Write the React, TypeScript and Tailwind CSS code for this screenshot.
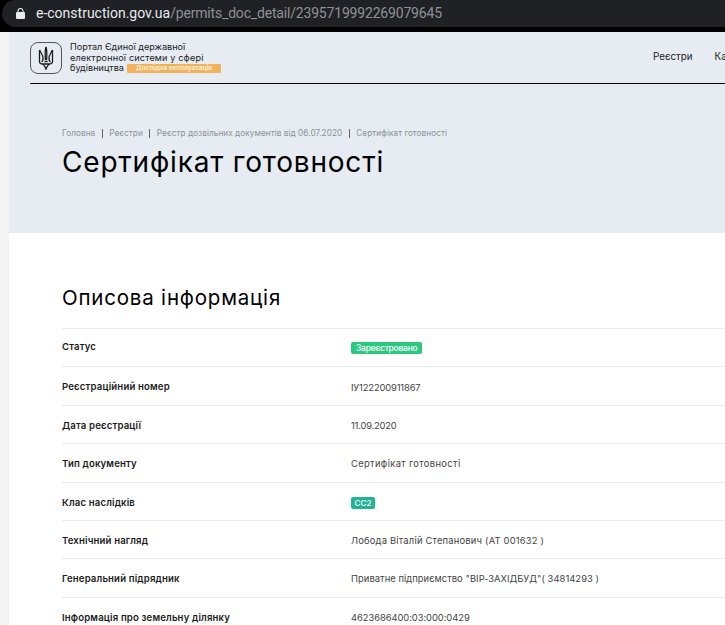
const ROWS: { label: string; value: string; kind?: string; cls?: string }[] = [
  { label: "Статус", value: "Зареєстровано", kind: "status" },
  { label: "Реєстраційний номер", value: "ІУ122200911867", cls: "tracking-[-0.15px]" },
  { label: "Дата реєстрації", value: "11.09.2020", cls: "tracking-[-0.2px]" },
  { label: "Тип документу", value: "Сертифікат готовності", cls: "tracking-[0.35px]" },
  { label: "Клас наслідків", value: "СС2", kind: "class" },
  { label: "Технічний нагляд", value: "Лобода Віталій Степанович (АТ 001632 )", cls: "tracking-[0.2px]" },
  { label: "Генеральний підрядник", value: "Приватне підприємство \"ВІР-ЗАХІДБУД\"( 34814293 )", cls: "tracking-[0.05px]" },
  { label: "Інформація про земельну ділянку", value: "4623686400:03:000:0429", cls: "tracking-[-0.05px]" },
];

const CRUMBS = ["Головна", "Реєстри", "Реєстр дозвільних документів від 06.07.2020", "Сертифікат готовності"];

function Trident() {
  return (
    <svg viewBox="0 0 16 24" className="h-[24px] w-[16px]" fill="none" stroke="#1a1a1a" strokeWidth="1.3">
      <path d="M8 1 C7 4 7 8 7.4 14 M8 1 C9 4 9 8 8.6 14" />
      <path d="M1.5 4 V15.5 C1.5 17.5 3 18 5 18 H11 C13 18 14.5 17.5 14.5 15.5 V4" />
      <path d="M1.5 4 C3 7 5 9 5 12 C5 14 4.5 15.5 3.6 15.8 M14.5 4 C13 7 11 9 11 12 C11 14 11.5 15.5 12.4 15.8" />
      <path d="M5 18 C6 19.5 7 20 8 23 C9 20 10 19.5 11 18 M6.5 15.5 H9.5" />
    </svg>
  );
}

function LockIcon() {
  return (
    <svg viewBox="0 0 9 11" className="h-[11px] w-[9px]" fill="#e8eaed">
      <path d="M2 4.5 V3 a2.5 2.5 0 0 1 5 0 V4.5" fill="none" stroke="#e8eaed" strokeWidth="1.1" />
      <rect x="0" y="4" width="9" height="7" rx="1" />
    </svg>
  );
}

function Row({ label, value, kind, cls }: { label: string; value: string; kind?: string; cls?: string }) {
  return (
    <div className={`flex h-[38.4px] items-center border-t border-[#e6ecee] ${kind === "status" ? "" : "pt-[3px]"}`}>
      <div className={`w-[289px] text-[9.6px] font-semibold tracking-[0.15px] text-[#1c1c1c] ${kind === "status" ? "pb-[1px]" : ""}`}>{label}</div>
      {kind === "status" && (
        <span className="rounded-[2px] bg-[#2bc97f] px-[5px] py-[1px] text-[8.5px] font-medium leading-[10px] tracking-[-0.25px] text-white">{value}</span>
      )}
      {kind === "class" && (
        <span className="rounded-[2px] bg-[#20b394] px-[3.5px] py-[1px] text-[8.2px] font-medium leading-[10px] text-white">{value}</span>
      )}
      {!kind && <div className={`text-[9.4px] text-[#444] ${cls}`}>{value}</div>}
    </div>
  );
}

export default function App() {
  return (
    <div className="h-[625px] w-[725px] overflow-hidden bg-[#f4f4f4] font-['Inter',sans-serif]">
      <div className="h-[32px] bg-black pl-[2px]">
        <div className="flex h-[27px] items-center rounded-l-[14px] bg-[#202124] pl-[14px]">
          <LockIcon />
          <div className="ml-[11px] whitespace-nowrap font-['Roboto',sans-serif] text-[14px]">
            <span className="text-[#e8eaed]">e-construction.gov.ua</span>
            <span className="tracking-[-0.18px] text-[#8f9296]">/permits_doc_detail/2395719992269079645</span>
          </div>
        </div>
      </div>

      <div className="ml-[9px] h-[593px] bg-white">
        <div className="h-[201px] bg-[#e6ecf2] pl-[21px]">
          <div className="flex h-[52px] items-center border-b border-black">
            <div className="flex h-[32px] w-[32px] shrink-0 items-center justify-center rounded-[8px] border border-[#555]">
              <Trident />
            </div>
            <div className="ml-[8px] w-[180px] shrink-0 whitespace-nowrap pt-[1px] text-[9.1px] leading-[10.5px] text-[#222]">
              <div>Портал Єдиної державної</div>
              <div className="tracking-[0.15px]">електронної системи у сфері</div>
              <div className="flex items-center gap-[3px]">
                будівництва
                <span className="flex h-[9px] w-[94px] items-center justify-center rounded-[1px] bg-[#f2b25c] text-[6.6px] font-semibold text-[#fff4dc]">Дослідна експлуатація</span>
              </div>
            </div>
            <div className="ml-[403px] flex shrink-0 gap-[22px] whitespace-nowrap text-[9.8px] text-[#222]">
              <span>Реєстри</span>
              <span>Каталог</span>
            </div>
          </div>
          <div className="ml-[32px] mt-[43px] flex items-center text-[8.25px] tracking-[0.04px] text-[#8c9299]">
            {CRUMBS.map((c, i) => (
              <span key={c} className="flex items-center">
                {i > 0 && <span className="mx-[6.5px] h-[9px] w-px bg-[#666]" />}
                {c}
              </span>
            ))}
          </div>
          <h1 className="ml-[32px] mt-[4px] text-[28px] font-normal leading-[38px] tracking-[0.8px] text-black">Сертифікат готовності</h1>
        </div>

        <div className="pl-[53px] pt-[50px]">
          <h2 className="text-[20.5px] font-normal leading-[30px] tracking-[0.8px] text-black">Описова інформація</h2>
          <div className="mt-[15px]">
            {ROWS.map((r) => (
              <Row key={r.label} {...r} />
            ))}
          </div>
        </div>
      </div>
    </div>
  );
}
